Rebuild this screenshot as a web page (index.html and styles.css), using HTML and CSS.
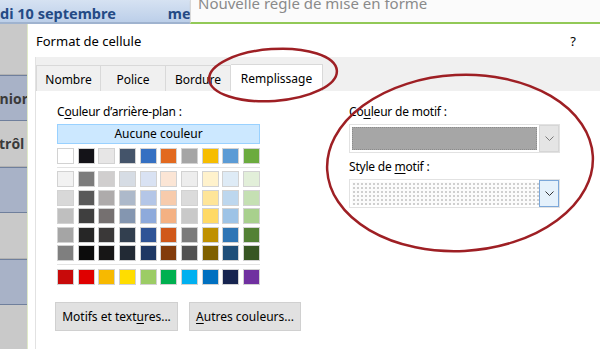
FILE: index.html
```html
<!DOCTYPE html>
<html lang="fr">

<head>
  <meta charset="UTF-8">
  <title>Format de cellule - Remplissage</title>
  <link rel="stylesheet" href="styles.css">
</head>

<body>
  <div class="screen">
    <div class="topbar">
      <div class="sheet-header">
        <span>di 10 septembre</span>
        <span class="next-day">me</span>
      </div>
      <div class="rule-window"><span class="rule-title">Nouvelle règle de mise en forme</span></div>
    </div>

    <div class="main">
      <div class="sheet-col">
        <div class="cell"></div>
        <div class="cell alt"><span>nior</span></div>
        <div class="cell start"><span>trôl</span></div>
        <div class="cell alt"></div>
        <div class="cell"></div>
        <div class="cell alt"></div>
        <div class="cell"></div>
      </div>

      <div class="dialog">
        <div class="dlg-title">
          <span>Format de cellule</span>
          <span class="help">?</span>
        </div>

        <div class="tabs">
          <div class="tab">Nombre</div>
          <div class="tab">Police</div>
          <div class="tab">Bordure</div>
          <div class="tab active">Remplissage</div>
        </div>

        <div class="panel">
          <div class="col-left">
            <div class="label">C<u>o</u>uleur d’arrière-plan :</div>
            <div class="no-color">Aucune couleur</div>

            <div class="swatches" id="base-row"></div>
            <div class="sep"></div>
            <div class="swatches tints" id="tint-rows"></div>
            <div class="sep"></div>
            <div class="swatches" id="std-row"></div>

            <div class="btn-row">
              <button class="btn motifs">Motifs et text<u>u</u>res...</button>
              <button class="btn autres"><u>A</u>utres couleurs...</button>
            </div>
          </div>

          <div class="col-right">
            <div class="label">Co<u>u</u>leur de motif :</div>
            <div class="combo">
              <div class="combo-field"><div class="fill-gray"></div></div>
              <div class="combo-btn">
                <svg width="9" height="5" viewBox="0 0 9 5"><path d="M0.5 0.5 L4.5 4.5 L8.5 0.5" fill="none" stroke="#7a7a7a" stroke-width="1"/></svg>
              </div>
            </div>

            <div class="label second">Style de <u>m</u>otif :</div>
            <div class="combo">
              <div class="combo-field"><div class="fill-dots"></div></div>
              <div class="combo-btn focus">
                <svg width="9" height="5" viewBox="0 0 9 5"><path d="M0.5 0.5 L4.5 4.5 L8.5 0.5" fill="none" stroke="#333" stroke-width="1"/></svg>
              </div>
            </div>
          </div>
        </div>
      </div>
    </div>

    <svg class="marks" width="600" height="349" viewBox="0 0 600 349">
      <ellipse cx="273" cy="75" rx="64" ry="26" transform="rotate(-4 273 75)" fill="none" stroke="#9e1f24" stroke-width="2.5"/>
      <ellipse cx="460" cy="163" rx="133" ry="88" transform="rotate(-3 460 163)" fill="none" stroke="#9e1f24" stroke-width="2.5"/>
    </svg>
  </div>

  <script>
    const base = ['#ffffff', '#141318', '#e7e6e6', '#44546a', '#3570c2', '#e2691f', '#a5a5a5', '#f6bd00', '#5b9bd5', '#6bab3e'];
    const tints = [
      ['#f2f2f2', '#7c7c7c', '#d0cece', '#d6dce4', '#d9e2f3', '#fbe5d5', '#ededed', '#fff2cc', '#deebf6', '#e2efd9'],
      ['#d8d8d8', '#595959', '#aeabab', '#adb9ca', '#b4c6e7', '#f7cbac', '#dbdbdb', '#fee599', '#bdd7ee', '#c5e0b3'],
      ['#bfbfbf', '#3f3f3f', '#757070', '#8496b0', '#8eaadb', '#f4b183', '#c9c9c9', '#ffd965', '#9dc3e6', '#a8d08d'],
      ['#a5a5a5', '#262626', '#3a3838', '#323f4f', '#2f5496', '#d0581a', '#7b7b7b', '#bf9000', '#2e75b5', '#538135'],
      ['#7f7f7f', '#0c0c0c', '#171616', '#222a35', '#1f3864', '#833c0b', '#525252', '#7f6000', '#1e4e79', '#375623']
    ];
    const std = ['#c80a0a', '#e00000', '#f7b900', '#ffdd00', '#9ccc65', '#00b050', '#00b0f0', '#0070c0', '#16244f', '#7030a0'];

    function fill(id, colors) {
      const box = document.getElementById(id);
      colors.forEach(c => {
        const s = document.createElement('div');
        s.className = 'swatch';
        s.style.backgroundColor = c;
        box.appendChild(s);
      });
    }

    fill('base-row', base);
    fill('tint-rows', tints.flat());
    fill('std-row', std);
  </script>
</body>

</html>
```

FILE: styles.css
```css
* {
  box-sizing: border-box;
  margin: 0;
  padding: 0;
}

body {
  font-family: 'Noto Sans', 'Open Sans', sans-serif;
  font-size: 12px;
  color: #000;
  background-color: #c8c8c8;
  overflow: hidden;
}

.screen {
  position: relative;
  width: 600px;
  height: 349px;
  overflow: hidden;
  display: flex;
  flex-direction: column;
}

/* background: worksheet + rule window */
.topbar {
  display: flex;
  height: 24px;
  flex-shrink: 0;
}

.sheet-header {
  width: 190px;
  display: flex;
  gap: 52px;
  overflow: hidden;
  white-space: nowrap;
  background: linear-gradient(#d6e2f2, #bccfe9);
  border-bottom: 2px solid #9fb3cf;
  color: #244a85;
  font-weight: bold;
  font-size: 14.5px;
  line-height: 20px;
  padding-top: 3px;
}

.next-day {
  flex-shrink: 0;
}

.rule-window {
  flex: 1;
  background-color: #fbfbfb;
  border-left: 1px solid #d8d8d8;
  border-bottom: 2px solid #92c957;
  box-shadow: 0 1px 1px #c9c9c9;
  color: #8a8a8a;
  font-size: 15px;
  line-height: 15px;
  padding-left: 7px;
  overflow: hidden;
  white-space: nowrap;
}

.rule-title {
  display: block;
  margin-top: -4px;
}

.main {
  flex: 1;
  display: flex;
  min-height: 0;
}

.sheet-col {
  width: 28px;
  flex-shrink: 0;
  display: flex;
  flex-direction: column;
  border-right: 1px solid #dfe9c8;
}

.cell {
  height: 46px;
  flex-shrink: 0;
  background-color: #c9c9c9;
  border-bottom: 1px solid #b2b2b2;
  display: flex;
  justify-content: flex-end;
  align-items: center;
  overflow: hidden;
  white-space: nowrap;
  font-family: 'Open Sans', sans-serif;
  font-weight: bold;
  font-size: 14px;
  color: #3a3a3a;
}

.cell:first-child {
  height: 51px;
}

.cell.alt {
  background-color: #a8b2c7;
  border-top: 1px solid #6f7f9c;
  border-bottom: 1px solid #6f7f9c;
}

.cell span {
  margin-right: -1px;
}

.cell.start {
  justify-content: flex-start;
}

.cell.start span {
  margin: 0 0 0 -1px;
}

/* dialog */
.dialog {
  flex: 1;
  background-color: #fff;
  display: flex;
  flex-direction: column;
  padding-left: 8px;
}

.dlg-title {
  height: 33px;
  flex-shrink: 0;
  display: flex;
  justify-content: space-between;
  align-items: center;
  font-size: 13px;
  padding-right: 24px;
}

.help {
  font-size: 13px;
}

.tabs {
  height: 34px;
  flex-shrink: 0;
  background-color: #f0f0f0;
  display: flex;
  align-items: flex-end;
  border-left: 1px solid #e2e2e2;
  margin-left: -1px;
}

.tab {
  height: 26px;
  width: 65px;
  display: flex;
  align-items: center;
  justify-content: center;
  padding-top: 1px;
  border: 1px solid #d9d9d9;
  border-bottom: none;
  border-left: none;
  background-color: #f0f0f0;
}

.tab:first-child {
  border-left: 1px solid #d9d9d9;
}

.tab.active {
  width: 92px;
  height: 27px;
  background-color: #fff;
}

.panel {
  flex: 1;
  border-left: 1px solid #e2e2e2;
  margin-left: -1px;
  display: grid;
  grid-template-columns: 203px 211px;
  column-gap: 89px;
  align-items: start;
  padding: 12px 0 0 21px;
}

.label {
  height: 17px;
  line-height: 17px;
  white-space: nowrap;
  letter-spacing: -0.2px;
}

.label.second {
  margin-top: 5px;
}

u {
  text-underline-offset: 2px;
}

.no-color {
  margin-top: 4px;
  height: 20px;
  background-color: #cce8ff;
  border: 1px solid #99d1ff;
  text-align: center;
  line-height: 18px;
}

.swatches {
  display: grid;
  grid-template-columns: repeat(10, 17px);
  justify-content: space-between;
  margin-top: 4px;
}

.tints {
  row-gap: 2.5px;
  margin-top: 3px;
}

.sep {
  height: 1px;
  background-color: #e3e3e3;
  margin-top: 3px;
}

.swatch {
  height: 16px;
  border: 1px solid #d2d2d2;
}

.btn-row {
  display: flex;
  gap: 11px;
  margin-top: 17px;
  margin-left: -2px;
  width: max-content;
}

.btn {
  height: 29px;
  font-family: inherit;
  font-size: 12px;
  background-color: #e1e1e1;
  border: 1px solid #d0d0d0;
  color: #000;
}

.motifs {
  width: 123px;
}

.autres {
  width: 112px;
}

.combo {
  margin-top: 4px;
  height: 29px;
  display: flex;
  border: 1px solid #e2e2e2;
  padding: 2px 0 2px 2px;
}

.combo-field {
  flex: 1;
  display: flex;
}

.fill-gray {
  flex: 1;
  margin-right: 2px;
  background-color: #a6a6a6;
  border: 1px dotted #8c8c8c;
}

.fill-dots {
  flex: 1;
  background-color: #fbfbfb;
  background-image: radial-gradient(#cfcfcf 0.8px, transparent 1px);
  background-size: 4px 4px;
}

.combo-btn {
  width: 20px;
  margin: -2px 0;
  display: flex;
  align-items: center;
  justify-content: center;
  background-color: #e5e5e5;
  border: 1px solid #d6d6d6;
}

.combo-btn.focus {
  background-color: #e5f1fb;
  border-color: #7ba7d9;
}

.marks {
  position: absolute;
  left: 0;
  top: 0;
  pointer-events: none;
}
```
